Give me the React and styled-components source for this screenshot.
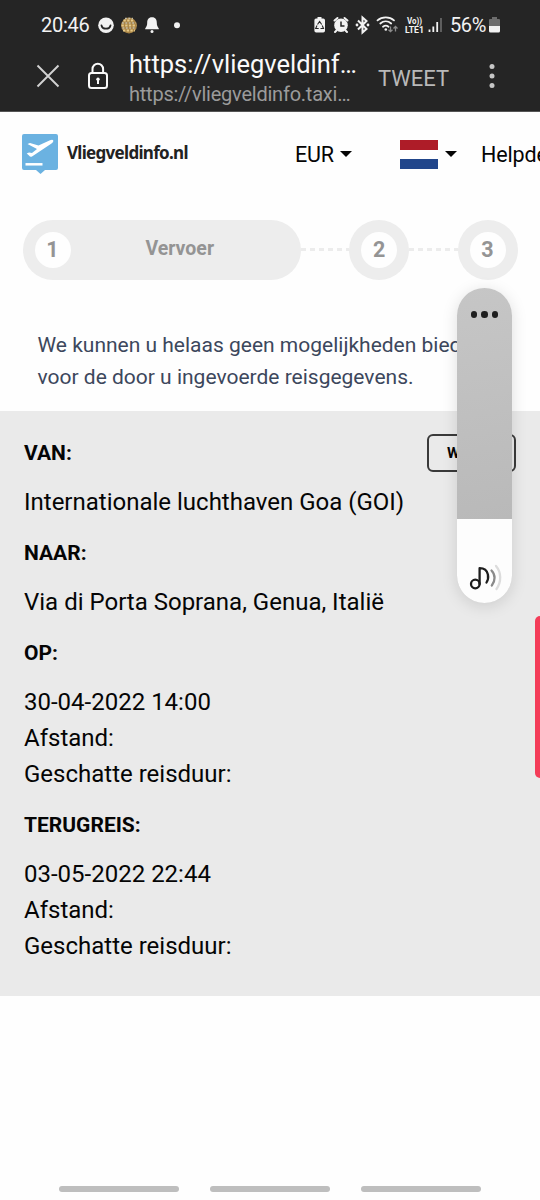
import React from "react";
import styled, { createGlobalStyle } from "styled-components";

const GlobalStyle = createGlobalStyle`
  * {
    box-sizing: border-box;
  }
  body {
    margin: 0;
    background-color: #fefefe;
    font-family: Roboto, sans-serif;
    overflow: hidden;
  }
`;

const Screen = styled.div`
  position: relative;
  display: flex;
  flex-direction: column;
  width: 540px;
  height: 1200px;
  overflow: hidden;
  background-color: #fefefe;
  color: #050505;
  white-space: nowrap;
`;

const StatusBar = styled.div`
  display: flex;
  align-items: center;
  flex-shrink: 0;
  height: 50px;
  padding: 0 40px 0 41px;
  background-color: #252525;
  color: #f2f2f2;
  font-size: 20px;
`;

const Clock = styled.span`
  width: 57px;
  letter-spacing: -0.25px;
`;

const StatusIcons = styled.svg`
  display: block;
  flex-shrink: 0;
  margin-left: ${({ $gap }) => $gap || 0}px;
`;

const Battery = styled.span`
  margin-left: 6px;
  width: 37px;
  letter-spacing: -0.4px;
`;

const BrowserBar = styled.div`
  display: flex;
  align-items: center;
  flex-shrink: 0;
  height: 62px;
  padding: 0 0 9px 36px;
  background-color: #252525;
  border-bottom: 1px solid #555;
`;

const Address = styled.div`
  display: flex;
  flex-direction: column;
  width: 249px;
  margin: 5px 0 0 20px;
`;

const PageTitle = styled.span`
  line-height: 31px;
  font-size: 25.5px;
  color: #fafafa;
`;

const PageUrl = styled.span`
  line-height: 28px;
  font-size: 20px;
  letter-spacing: -0.23px;
  color: #9b9b9b;
`;

const TweetButton = styled.span`
  width: 72px;
  margin-top: 5px;
  font-size: 22px;
  color: #b9b9b9;
`;

const SiteHeader = styled.header`
  display: flex;
  align-items: center;
  flex-shrink: 0;
  height: 84px;
  padding-left: 22px;
  font-size: 21.5px;
  letter-spacing: -0.15px;

  > * {
    flex-shrink: 0;
  }
`;

const Brand = styled.span`
  width: 237px;
  padding: 0 0 3px 9px;
  font-family: "Noto Sans", sans-serif;
  font-size: 17px;
  font-weight: 700;
  letter-spacing: -0.7px;
  color: #222;
`;

const Currency = styled.span`
  width: 38px;
`;

const Caret = styled.span`
  margin-left: 7px;
  border: 6px solid transparent;
  border-top-color: #050505;
  border-bottom: 0;
`;

const Flag = styled.div`
  width: 38px;
  height: 29px;
  margin-left: 48px;
  background: linear-gradient(
    #ae1c28 0 33.3%,
    #fff 33.3% 66.6%,
    #21468b 66.6%
  );
`;

const HelpLink = styled.span`
  margin-left: 24px;
`;

const Steps = styled.div`
  display: flex;
  align-items: center;
  flex-shrink: 0;
  height: 60px;
  margin: 24px 22.5px 0;
  font-weight: 700;
  color: #949494;
`;

const Step = styled.div`
  display: flex;
  align-items: center;
  width: ${({ $wide }) => ($wide ? 278.5 : 60)}px;
  height: 60px;
  padding: 0 12px;
  flex-shrink: 0;
  border-radius: 30px;
  background-color: #ededed;
`;

const StepNumber = styled.div`
  width: 36px;
  height: 36px;
  flex-shrink: 0;
  border-radius: 50%;
  background-color: #fefefe;
  font-size: 21.5px;
  line-height: 35px;
  text-align: center;
`;

const StepLabel = styled.span`
  flex: 1;
  padding-bottom: 3px;
  font-size: 19.5px;
  text-align: center;
`;

const Dashes = styled.div`
  flex: 1;
  height: 3px;
  margin-top: -2px;
  background: repeating-linear-gradient(
    90deg,
    #ececec 0 5px,
    transparent 5px 9px
  );
`;

const Notice = styled.p`
  flex-shrink: 0;
  margin: 0;
  padding: 50px 0 17.5px 37.5px;
  font-size: 21px;
  line-height: 31.5px;
  color: #3c475c;
`;

const Details = styled.section`
  display: flex;
  justify-content: space-between;
  flex-shrink: 0;
  height: 585.5px;
  padding: 27.5px 24px 0;
  background-color: #eaeaea;
`;

const Label = styled.div`
  line-height: 30px;
  margin-bottom: 16px;
  font-size: 21px;
  font-weight: 700;
`;

const Value = styled.div`
  margin-bottom: 18px;
  font-size: 24px;
  line-height: 36px;
`;

const EditButton = styled.div`
  width: 89px;
  height: 38px;
  margin: -4px 0 0 0;
  padding-left: 18px;
  border: 2px solid #3a3a3a;
  border-radius: 6px;
  font-size: 15px;
  font-weight: 700;
  line-height: 34px;
`;

const VolumeSlider = styled.div`
  position: absolute;
  top: 288px;
  left: 457px;
  display: flex;
  flex-direction: column;
  width: 55px;
  height: 315px;
  overflow: hidden;
  border-radius: 27.5px;
  background: linear-gradient(170deg, #c6c6c6, #b9b9b9 74%);
  box-shadow: 0 3px 16px rgba(0, 0, 0, 0.13);
`;

const MoreDots = styled.div`
  display: flex;
  justify-content: center;
  gap: 4px;
  flex: 1;
  padding-top: 23px;
`;

const Dot = styled.span`
  width: 6.5px;
  height: 6.5px;
  border-radius: 50%;
  background-color: #1f1f1f;
`;

const VolumeLevel = styled.div`
  height: 84px;
  padding: 43px 0 0 11px;
  background-color: #fdfdfd;
`;

const FeedbackTab = styled.div`
  position: absolute;
  top: 616px;
  right: 0;
  width: 5px;
  height: 162px;
  border-radius: 5px 0 0 5px;
  background-color: #f43d59;
`;

const NavHints = styled.div`
  display: flex;
  gap: 31px;
  margin-top: auto;
  padding: 0 0 8px 59px;
`;

const Hint = styled.span`
  width: 120px;
  height: 6px;
  border-radius: 3px;
  background-color: #bebebe;
`;

const trips = [
  { label: "VAN:", lines: ["Internationale luchthaven Goa (GOI)"] },
  { label: "NAAR:", lines: ["Via di Porta Soprana, Genua, Italië"] },
  {
    label: "OP:",
    lines: ["30-04-2022 14:00", "Afstand:", "Geschatte reisduur:"]
  },
  {
    label: "TERUGREIS:",
    lines: ["03-05-2022 22:44", "Afstand:", "Geschatte reisduur:"]
  }
];

const NotificationIcons = () => (
  <StatusIcons width="84" height="20" viewBox="98 15 84 20">
    <circle cx="106" cy="25.3" r="7.8" fill="#f2f2f2" />
    <path
      d="M101.5 25.5c1 4.3 8 4.3 9 0"
      fill="none"
      stroke="#252525"
      strokeWidth="1.8"
      strokeLinecap="round"
    />
    <circle cx="129" cy="25.5" r="7.9" fill="#a98445" />
    <path
      d="M123.500 20.500h11M121.500 25.500h15M123 30.500h12"
      stroke="#e6c987"
      strokeWidth="2.2"
      strokeDasharray="2.300 1.400"
    />
    <path
      d="M125 18.500h8M122 23h14M122.500 28h13"
      stroke="#c3bda9"
      strokeWidth="1.600"
      strokeDasharray="1.800 1.600"
    />
    <path
      d="M152 17.300c-3.700 0-4.800 2.600-4.800 5.500 0 3-.8 4-2 5.600v.9h13.600v-.9c-1.200-1.600-2-2.600-2-5.600 0-2.900-1.100-5.500-4.800-5.500z"
      fill="#f2f2f2"
    />
    <circle cx="152" cy="31.400" r="1.500" fill="#f2f2f2" />
    <circle cx="177" cy="25.200" r="3" fill="#f2f2f2" />
  </StatusIcons>
);

const SystemIcons = () => (
  <StatusIcons width="130" height="20" viewBox="314 15 130 20" $gap={132}>
    <path
      d="M316 18.500h1.500V17h4v1.500h1.700q1.800 0 1.800 1.800v10.400q0 1.800-1.800 1.800h-7q-1.800 0-1.800-1.800V20.300q0-1.800 1.600-1.800z"
      fill="#f2f2f2"
    />
    <path
      d="M317.500 24.500l2.100-3 2.100 3M322.200 25.500l1.300 3h-3M318.700 28.500h-3l1.300-3"
      fill="none"
      stroke="#252525"
      strokeWidth="1.100"
    />
    <circle cx="341" cy="25.300" r="6.800" fill="#f2f2f2" />
    <path
      d="M334.500 20.500l3-2.500M347.500 20.500l-3-2.500M336.500 30.500l-1.500 1.500M345.500 30.500l1.500 1.500"
      stroke="#f2f2f2"
      strokeWidth="2"
      strokeLinecap="round"
    />
    <path d="M341 21.500v4.500h3.500" fill="none" stroke="#252525" strokeWidth="1.500" />
    <path
      d="M358 20.500l8.500 8.500-4 3.500V17.500l4 3.500-8.500 8.500"
      fill="none"
      stroke="#f2f2f2"
      strokeWidth="2"
    />
    <circle cx="357" cy="25" r="1.400" fill="#f2f2f2" />
    <circle cx="368" cy="25" r="1.400" fill="#f2f2f2" />
    <path
      d="M377.500 20.300c4.500-4 12-4 16.500 0M380.300 23.500c3.200-2.800 7.700-2.800 10.900 0M383 26.700c1.700-1.400 3.800-1.400 5.500 0"
      fill="none"
      stroke="#f2f2f2"
      strokeWidth="1.800"
      strokeLinecap="round"
    />
    <circle cx="385.800" cy="29.500" r="1.300" fill="#f2f2f2" />
    <path
      d="M390.500 26.500v5M388.500 29.700l2 2 2-2M395.500 31.500v-5M393.500 28.500l2-2 2 2"
      fill="none"
      stroke="#8b8b8b"
      strokeWidth="1.300"
    />
    <g
      fill="#f2f2f2"
      fontFamily="Roboto, sans-serif"
      fontWeight="700"
      fontSize="9"
    >
      <text x="407" y="24" textLength="15" lengthAdjust="spacingAndGlyphs">
        Vo))
      </text>
      <text x="405" y="32.500" textLength="19" lengthAdjust="spacingAndGlyphs">
        LTE1
      </text>
    </g>
    <path
      d="M429.500 32v-2.500M433.300 32v-5.500M437.200 32v-10"
      stroke="#f2f2f2"
      strokeWidth="1.800"
    />
    <path d="M441 32V18" stroke="#666" strokeWidth="1.800" />
  </StatusIcons>
);

const App = () => (
  <>
    <GlobalStyle />
    <Screen>
      <StatusBar>
        <Clock>20:46</Clock>
        <NotificationIcons />
        <SystemIcons />
        <Battery>56%</Battery>
        <StatusIcons width="11" height="16" viewBox="0 0 11 16" $gap={2}>
          <path d="M3 0h5v2h2q1 0 1 1v6H0V3q0-1 1-1h2z" fill="#6d6d6d" />
          <path d="M0 9h11v5q0 1.500-1.500 1.500h-8Q0 15.500 0 14z" fill="#f2f2f2" />
        </StatusIcons>
      </StatusBar>

      <BrowserBar>
        <svg width="73" height="30" viewBox="36 61 73 30" fill="none">
          <path
            d="M37.500 65.500l21 21M58.500 65.500l-21 21"
            stroke="#d2d2d2"
            strokeWidth="1.900"
          />
          <g stroke="#fafafa" strokeWidth="2">
            <rect x="89" y="73" width="18" height="15" rx="2.500" />
            <path d="M92.500 73v-4a5.300 5.300 0 0 1 10.600 0v4" />
            <path d="M98 80v4" />
          </g>
          <circle cx="98" cy="79.200" r="1.700" fill="#fafafa" />
        </svg>
        <Address>
          <PageTitle>https://vliegveldinf…</PageTitle>
          <PageUrl>https://vliegveldinfo.taxi…</PageUrl>
        </Address>
        <TweetButton>TWEET</TweetButton>
        <StatusIcons
          width="6"
          height="26"
          viewBox="0 0 6 26"
          fill="#c6c6c6"
          $gap={39}
        >
          <circle cx="3" cy="3.500" r="2.500" />
          <circle cx="3" cy="13" r="2.500" />
          <circle cx="3" cy="22.500" r="2.500" />
        </StatusIcons>
      </BrowserBar>

      <SiteHeader>
        <svg width="36" height="40" viewBox="0 0 36 40">
          <path
            d="M2 0h32q2 0 2 2v32q0 2-2 2H23l-4.500 4-4.500-4H2q-2 0-2-2V2q0-2 2-2z"
            fill="#6bb2e1"
          />
          <path
            d="M5.500 10l2.500-1 8.500 2.500L28 6.200q2.800-1 3.300.3t-1.800 3L10 22.500q-1.800.8-3-1l-2.300-2 2.300-1 3 .6 5-4z"
            fill="#fff"
          />
          <path d="M3.500 30.300h17" stroke="#fff" strokeWidth="2.500" />
        </svg>
        <Brand>Vliegveldinfo.nl</Brand>
        <Currency>EUR</Currency>
        <Caret />
        <Flag />
        <Caret />
        <HelpLink>Helpdesk</HelpLink>
      </SiteHeader>

      <Steps>
        <Step $wide>
          <StepNumber>1</StepNumber>
          <StepLabel>Vervoer</StepLabel>
        </Step>
        <Dashes />
        <Step>
          <StepNumber>2</StepNumber>
        </Step>
        <Dashes />
        <Step>
          <StepNumber>3</StepNumber>
        </Step>
      </Steps>

      <Notice>
        We kunnen u helaas geen mogelijkheden bieden
        <br />
        voor de door u ingevoerde reisgegevens.
      </Notice>

      <Details>
        <div>
          {trips.map(({ label, lines }) => (
            <React.Fragment key={label}>
              <Label>{label}</Label>
              <Value>
                {lines.map(line => (
                  <div key={line}>{line}</div>
                ))}
              </Value>
            </React.Fragment>
          ))}
        </div>
        <EditButton>W</EditButton>
      </Details>

      <NavHints>
        <Hint />
        <Hint />
        <Hint />
      </NavHints>

      <VolumeSlider>
        <MoreDots>
          <Dot />
          <Dot />
          <Dot />
        </MoreDots>
        <VolumeLevel>
          <svg
            width="34"
            height="30"
            viewBox="0 0 34 30"
            fill="none"
            strokeWidth="2.300"
            strokeLinecap="round"
            strokeLinejoin="round"
          >
            <circle cx="7.300" cy="22" r="4.300" stroke="#1d1d1d" />
            <path
              d="M11.600 22V6.200c4 0 7.400 2.300 8.300 6.300.6 3 .2 5.500-1.400 8"
              stroke="#1d1d1d"
            />
            <path d="M23.500 8.500c4 4 4 10.500.3 15" stroke="#8a8a8a" />
            <path d="M28 4c5.500 6.500 5.500 16 .5 23" stroke="#dcdcdc" />
          </svg>
        </VolumeLevel>
      </VolumeSlider>
      <FeedbackTab />
    </Screen>
  </>
);

export default App;
